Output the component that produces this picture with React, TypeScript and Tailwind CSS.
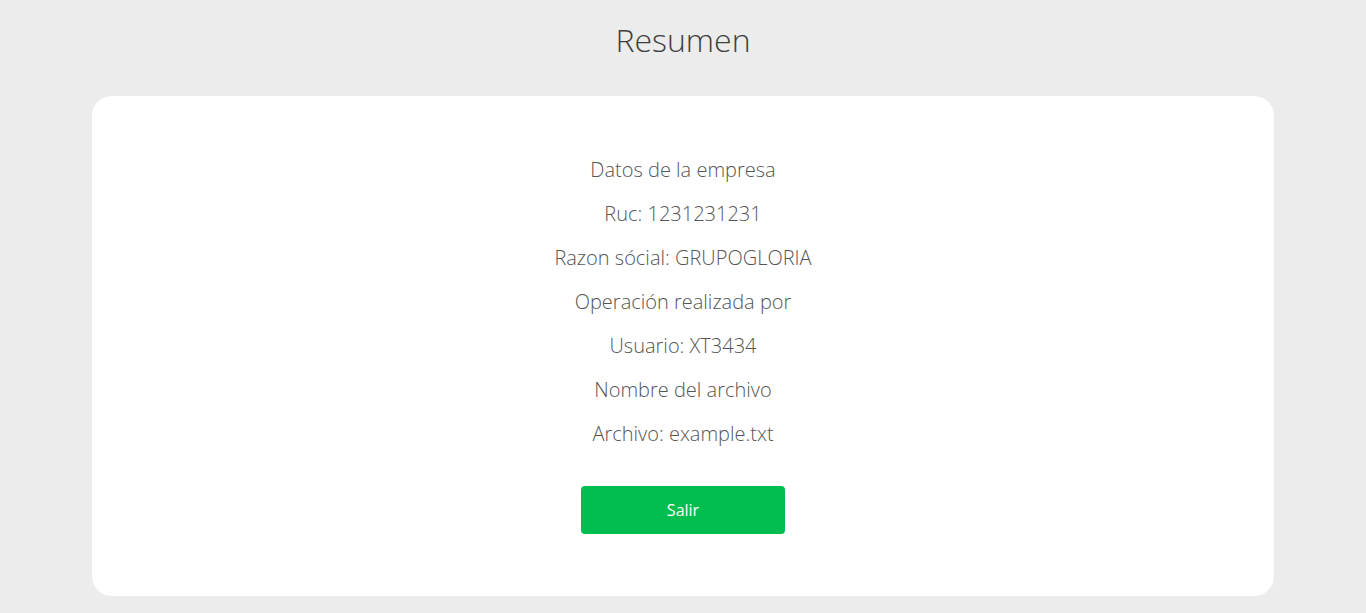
const lines = [
  "Datos de la empresa",
  "Ruc: 1231231231",
  "Razon sócial: GRUPOGLORIA",
  "Operación realizada por",
  "Usuario: XT3434",
  "Nombre del archivo",
  "Archivo: example.txt",
];

export default function App() {
  return (
    <div className="min-h-screen bg-[#ebeceb] px-[92px] pt-5 font-['Open_Sans',sans-serif]">
      <h1 className="text-center text-[32px] leading-10 font-light text-[#3f3f3f]">
        Resumen
      </h1>

      <div className="mt-9 rounded-[20px] bg-white pt-[60px] pb-[62px] flex flex-col items-center">
        <div className="flex flex-col items-center gap-4">
          {lines.map((l) => (
            <p key={l} className="text-[20px] leading-7 font-light text-[#555]">
              {l}
            </p>
          ))}
        </div>

        <button
          type="button"
          className="mt-[38px] h-12 w-[204px] rounded bg-[#02be4f] text-base font-medium text-white"
        >
          Salir
        </button>
      </div>
    </div>
  );
}
